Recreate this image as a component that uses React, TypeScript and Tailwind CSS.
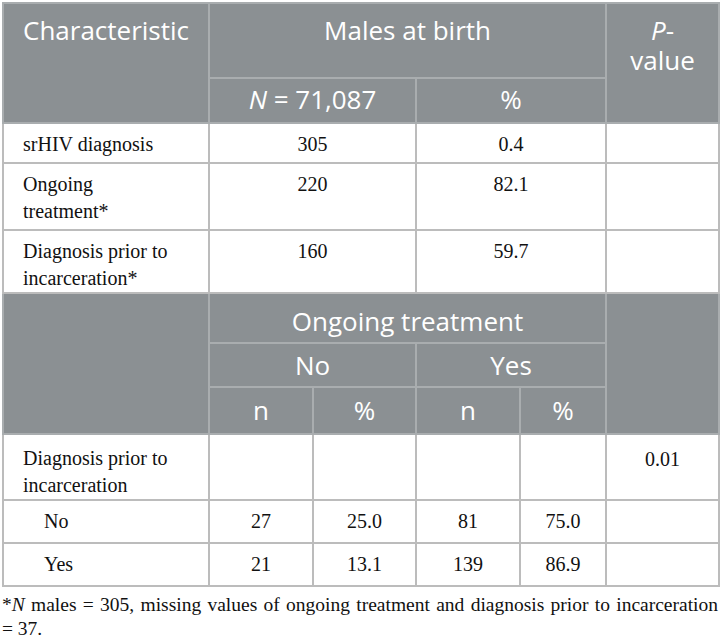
import React from 'react';

const head = 'bg-[#8b9093] text-white font-["Open_Sans",sans-serif] text-[26px] leading-[30px] border-2 border-[#a9adaf] align-top';
const cell = 'border-2 border-[#bcbcbc] align-top font-["Liberation_Serif",serif] text-[20px] leading-[27px] text-[#111]';

const topRows = [
  { label: ['srHIV diagnosis'], n: '305', pct: '0.4', h: 'h-[40px]' },
  { label: ['Ongoing', 'treatment*'], n: '220', pct: '82.1', h: 'h-[67px]' },
  { label: ['Diagnosis prior to', 'incarceration*'], n: '160', pct: '59.7', h: 'h-[63px]' },
];

const lowerRows = [
  { label: 'No', vals: ['27', '25.0', '81', '75.0'] },
  { label: 'Yes', vals: ['21', '13.1', '139', '86.9'] },
];

export default function App() {
  return (
    <div className="w-[720px] h-[644px] bg-white pt-[2px] px-[2px]">
      <table className="table-fixed border-collapse w-[716px]">
        <colgroup>
          <col className="w-[206px]" />
          <col className="w-[104px]" />
          <col className="w-[103px]" />
          <col className="w-[104px]" />
          <col className="w-[86px]" />
          <col className="w-[113px]" />
        </colgroup>
        <tbody>
          <tr className="h-[75px]">
            <td rowSpan={2} className={`${head} pl-[19px] pt-[11px]`}>Characteristic</td>
            <td colSpan={4} className={`${head} text-center pt-[11px]`}>Males at birth</td>
            <td rowSpan={2} className={`${head} text-center pt-[11px]`}>
              <i>P</i>-<br />value
            </td>
          </tr>
          <tr className="h-[45px]">
            <td colSpan={2} className={`${head} text-center pt-[5px]`}>
              <i>N</i> = 71,087
            </td>
            <td colSpan={2} className={`${head} text-center pt-[5px]`}>%</td>
          </tr>
          {topRows.map((r, i) => (
            <tr key={i} className={r.h}>
              <td className={`${cell} pl-[19px] pt-[7px]`}>
                {r.label.map((l, j) => (
                  <div key={j}>{l}</div>
                ))}
              </td>
              <td colSpan={2} className={`${cell} text-center pt-[7px]`}>{r.n}</td>
              <td colSpan={2} className={`${cell} text-center pt-[7px]`}>{r.pct}</td>
              <td className={cell}></td>
            </tr>
          ))}
          <tr className="h-[50px]">
            <td rowSpan={3} className={head}></td>
            <td colSpan={4} className={`${head} text-center pt-[12px]`}>Ongoing treatment</td>
            <td rowSpan={3} className={head}></td>
          </tr>
          <tr className="h-[44px]">
            <td colSpan={2} className={`${head} text-center pt-[6px]`}>No</td>
            <td colSpan={2} className={`${head} text-center pt-[6px]`}>Yes</td>
          </tr>
          <tr className="h-[47px]">
            <td className={`${head} text-center pt-[7px]`}>n</td>
            <td className={`${head} text-center pt-[7px]`}>%</td>
            <td className={`${head} text-center pt-[7px]`}>n</td>
            <td className={`${head} text-center pt-[7px]`}>%</td>
          </tr>
          <tr className="h-[66px]">
            <td className={`${cell} pl-[19px] pt-[10px]`}>
              <div>Diagnosis prior to</div>
              <div>incarceration</div>
            </td>
            <td className={cell}></td>
            <td className={cell}></td>
            <td className={cell}></td>
            <td className={cell}></td>
            <td className={`${cell} text-center pt-[11px]`}>0.01</td>
          </tr>
          {lowerRows.map((r) => (
            <tr key={r.label} className="h-[43px]">
              <td className={`${cell} pl-[40px] pt-[7px]`}>{r.label}</td>
              {r.vals.map((v, j) => (
                <td key={j} className={`${cell} text-center pt-[7px]`}>{v}</td>
              ))}
              <td className={cell}></td>
            </tr>
          ))}
        </tbody>
      </table>
      <p className='font-["Liberation_Serif",serif] text-[19.5px] leading-[24px] text-justify text-[#111] mt-[6px]'>
        *<i>N</i>&nbsp;males = 305, missing values of ongoing treatment and diagnosis prior to incarceration =&nbsp;37.
      </p>
    </div>
  );
}
